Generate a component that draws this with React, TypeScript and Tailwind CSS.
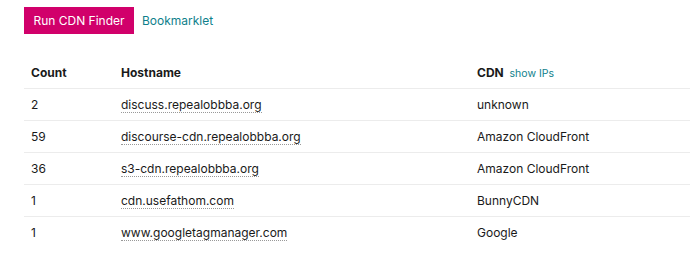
const rows = [
  { count: 2, host: 'discuss.repealobbba.org', cdn: 'unknown' },
  { count: 59, host: 'discourse-cdn.repealobbba.org', cdn: 'Amazon CloudFront' },
  { count: 36, host: 's3-cdn.repealobbba.org', cdn: 'Amazon CloudFront' },
  { count: 1, host: 'cdn.usefathom.com', cdn: 'BunnyCDN' },
  { count: 1, host: 'www.googletagmanager.com', cdn: 'Google' },
];

export default function App() {
  return (
    <div className="bg-white pl-6 pt-[7px] h-[258px] overflow-hidden text-[12px] text-[#1a1a1a] font-[family-name:Inter,sans-serif]">
      {/* Actions */}
      <div className="flex items-center gap-2">
        <button className="h-[27px] w-[110px] bg-[#d1006b] text-white text-[12px] leading-none">
          Run CDN Finder
        </button>
        <a className="text-[12px] text-[#0f7f8c] cursor-pointer">Bookmarklet</a>
      </div>

      {/* Results */}
      <table className="mt-[23px] w-[666px] border-collapse text-left">
        <thead>
          <tr className="h-[31px] border-b border-[#ececec]">
            <th className="w-[90px] pl-[7px] pt-px font-bold">Count</th>
            <th className="w-[356px] pl-[7px] pt-px font-bold">Hostname</th>
            <th className="pl-[7px] pt-px font-bold">
              CDN <span className="ml-[3px] text-[10.5px] font-normal text-[#0f7f8c] cursor-pointer">show IPs</span>
            </th>
          </tr>
        </thead>
        <tbody>
          {rows.map((r, i) => (
            <tr key={i} className={`h-[32px] ${i < rows.length - 1 ? 'border-b border-[#ececec]' : ''}`}>
              <td className="pl-[7px] pt-px">{r.count}</td>
              <td className="pl-[7px] pt-px">
                <span className="border-b border-dotted border-[#999]">{r.host}</span>
              </td>
              <td className="pl-[7px] pt-px">{r.cdn}</td>
            </tr>
          ))}
        </tbody>
      </table>
    </div>
  );
}
